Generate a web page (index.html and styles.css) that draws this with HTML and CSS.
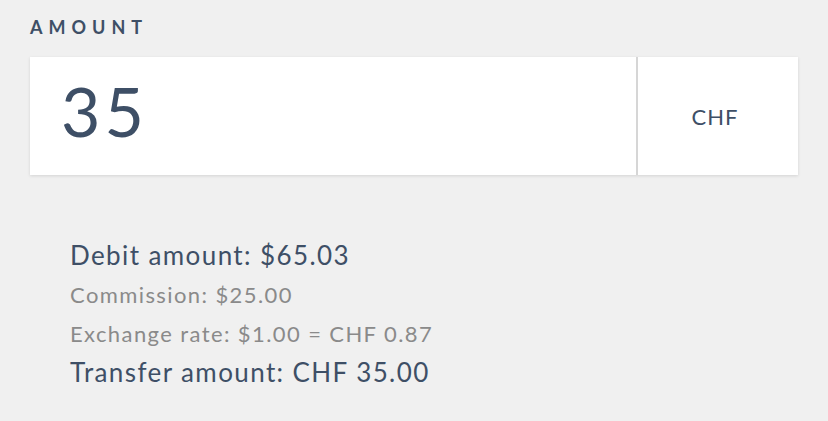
FILE: index.html
```html
<!DOCTYPE html>
<html>
<head>
<meta charset="utf-8">
<link rel="stylesheet" href="styles.css">
</head>
<body>
<div class="page">
  <div class="label">AMOUNT</div>
  <div class="field">
    <div class="value">35</div>
    <div class="currency">CHF</div>
  </div>
  <div class="summary">
    <div class="line main">Debit amount: $65.03</div>
    <div class="line sub">Commission: $25.00</div>
    <div class="line sub">Exchange rate: $1.00 = CHF 0.87</div>
    <div class="line main">Transfer amount: CHF 35.00</div>
  </div>
</div>
</body>
</html>
```
FILE: styles.css
```css
html, body {
  margin: 0;
  padding: 0;
  background: #f0f0f0;
}
body {
  font-family: Lato, "Noto Sans", sans-serif;
  color: #3e4f66;
}
.page {
  padding: 16px 30px 0 30px;
}
.label {
  font-size: 18px;
  font-weight: 700;
  letter-spacing: 6px;
  line-height: 22px;
  margin-left: 0;
  color: #3e4f66;
}
.field {
  margin-top: 19px;
  display: flex;
  height: 118px;
  background: #fff;
  box-shadow: 0 1px 3px rgba(0,0,0,0.12);
}
.value {
  flex: 1;
  display: flex;
  align-items: center;
  padding-left: 31px;
  padding-bottom: 12px;
  font-size: 68px;
  letter-spacing: 4px;
  color: #3e4f66;
  border-right: 2px solid #d6d6d6;
}
.currency {
  width: 160px;
  display: flex;
  align-items: center;
  justify-content: center;
  padding-right: 6px;
  box-sizing: border-box;
  font-size: 22px;
  letter-spacing: 1px;
  color: #3e4f66;
}
.summary {
  padding: 61px 0 0 40px;
}
.line {
  line-height: 39px;
  letter-spacing: 1.4px;
}
.main {
  font-size: 26px;
  color: #3e4f66;
}
.sub {
  font-size: 22px;
  color: #8a8a8a;
}
```
